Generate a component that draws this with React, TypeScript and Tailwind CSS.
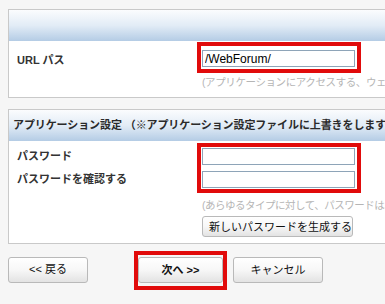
import React from "react";

const font = "font-['Liberation_Sans','Noto_Sans_CJK_JP',sans-serif]";

function Field({ value }: { value?: string }) {
  return (
    <input
      readOnly
      value={value ?? ""}
      className={`block h-[17px] w-[153px] border border-[#8ea4b8] bg-white px-[2px] text-[12px] leading-[15px] text-black outline-none ${font}`}
    />
  );
}

function Panel({ title, children }: { title: string; children: React.ReactNode }) {
  return (
    <div className="w-[560px] border border-[#c9c9c9] bg-white">
      <div className="flex h-[31px] items-center bg-gradient-to-b from-[#fbfcfe] via-[#e2ecf6] to-[#b4cce5] px-[4px] text-[11px] font-bold tracking-[-0.1px] text-[#2a2a2a] whitespace-nowrap">
        {title}
      </div>
      {children}
    </div>
  );
}

function Button({ label, bold, w }: { label: string; bold?: boolean; w: string }) {
  return (
    <button
      className={`h-[26px] ${w} rounded-[3px] border border-[#b9b9b9] bg-gradient-to-b from-white via-[#f7f7f7] to-[#e3e3e3] text-[11px] text-[#111] ${bold ? "font-bold" : ""}`}
    >
      {label}
    </button>
  );
}

export default function App() {
  return (
    <div className={`h-[304px] w-[385px] overflow-hidden bg-[#f6f6f6] ${font}`}>
      <div className="pl-[8px] pt-[9px]">
        <Panel title="">
          <div className="flex pt-[9px] pb-[6px]">
            <div className="w-[193px] pl-[8px] pt-[2px] text-[11px] font-bold text-[#333]">URL パス</div>
            <div>
              <div className="relative w-[153px]">
                <span className="pointer-events-none absolute -left-[5px] -top-[8px] -right-[6px] -bottom-[6px] border-[4px] border-[#e10b0b]" />
                <Field value="/WebForum/" />
              </div>
              <div className="mt-[8px] whitespace-nowrap text-[10.5px] tracking-[-0.4px] text-[#b5b5b5]">
                (アプリケーションにアクセスする、ウェブブラウザのURL)
              </div>
            </div>
          </div>
        </Panel>

        <div className="mt-[11px]">
          <Panel title="アプリケーション設定 （※アプリケーション設定ファイルに上書きをします）">
            <div className="flex pt-[7px] pb-[5px]">
              <div className="w-[193px] pl-[8px] text-[11px] font-bold text-[#333]">
                <div className="h-[23px]">パスワード</div>
                <div className="h-[23px]">パスワードを確認する</div>
              </div>
              <div>
                <div className="relative flex w-[153px] flex-col gap-[6px]">
                  <span className="pointer-events-none absolute -left-[5px] -top-[5px] -right-[6px] -bottom-[5px] border-[4px] border-[#e10b0b]" />
                  <Field />
                  <Field />
                </div>
                <div className="mt-[10px] whitespace-nowrap text-[10.5px] tracking-[-0.5px] text-[#b5b5b5]">
                  (あらゆるタイプに対して、パスワードは、最低6文字)
                </div>
                <button className="mt-[1px] h-[21px] w-[151px] rounded-[3px] border border-[#b9b9b9] bg-gradient-to-b from-white via-[#f7f7f7] to-[#e3e3e3] text-left pl-[6px] text-[11px] text-[#111]">
                  新しいパスワードを生成する
                </button>
              </div>
            </div>
          </Panel>
        </div>

        <div className="mt-[13px] flex items-start">
          <Button label="<< 戻る" w="w-[80px]" />
          <div className="relative ml-[50px]">
            <span className="pointer-events-none absolute -left-[4px] -top-[6px] -right-[4px] -bottom-[7px] border-[4px] border-[#e10b0b]" />
            <Button label="次へ >>" bold w="w-[85px]" />
          </div>
          <div className="ml-[10px]">
            <Button label="キャンセル" w="w-[90px]" />
          </div>
        </div>
      </div>
    </div>
  );
}
